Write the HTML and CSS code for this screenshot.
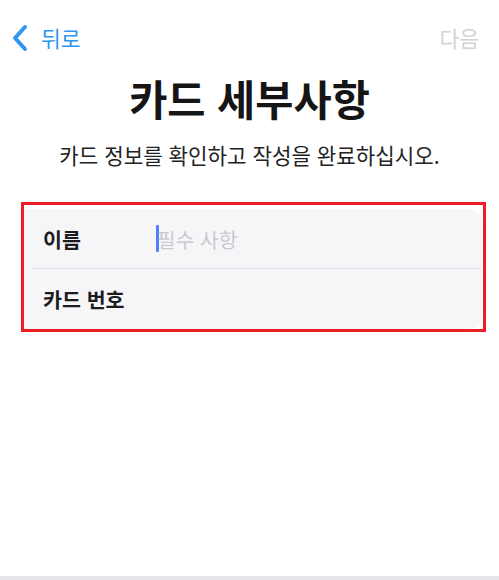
FILE: index.html
```html
<!DOCTYPE html>
<html lang="ko">
<head>
<meta charset="utf-8">
<title>카드 세부사항</title>
<link rel="stylesheet" href="styles.css">
</head>
<body>
<div class="page">
  <header class="nav">
    <a class="back">
      <svg class="chev" width="18" height="28" viewBox="0 0 18 28" aria-hidden="true">
        <polyline points="14,3 4,14 14,25" fill="none" stroke="#2e95f3" stroke-width="4" stroke-linecap="round" stroke-linejoin="round"/>
      </svg>
      <span class="back-label">뒤로</span>
    </a>
    <span class="next">다음</span>
  </header>

  <h1 class="title">카드 세부사항</h1>
  <p class="subtitle">카드 정보를 확인하고 작성을 완료하십시오.</p>

  <div class="highlight">
    <div class="card">
      <div class="row">
        <span class="label">이름</span>
        <span class="field"><span class="caret"></span><span class="placeholder">필수 사항</span></span>
      </div>
      <div class="sep"></div>
      <div class="row row-last">
        <span class="label">카드 번호</span>
      </div>
    </div>
  </div>

  <div class="spacer"></div>
  <div class="bottom-strip"></div>
</div>
</body>
</html>
```

FILE: styles.css
```css
html, body {
  margin: 0;
  padding: 0;
  background: #ffffff;
}

body {
  font-family: "Noto Sans CJK KR", "Noto Sans", sans-serif;
  color: #1c1c1e;
}

.page {
  min-height: 580px;
  display: flex;
  flex-direction: column;
}

.nav {
  height: 74px;
  display: flex;
  align-items: center;
  justify-content: space-between;
  padding: 2px 20px 0 11px;
  box-sizing: border-box;
}

.back {
  display: flex;
  align-items: center;
  gap: 12px;
  color: #2e95f3;
}

.chev {
  display: block;
}

.back-label {
  font-size: 21.5px;
  line-height: 28px;
}

.next {
  font-size: 21.5px;
  line-height: 28px;
  color: #d3d3d6;
}

.title {
  margin: 0;
  text-align: center;
  font-size: 41.5px;
  line-height: 48px;
  font-weight: 700;
  color: #151515;
}

.subtitle {
  margin: 19px 0 0;
  text-align: center;
  font-size: 21.2px;
  line-height: 28px;
  color: #222222;
}

.highlight {
  margin: 33px 0 0 21px;
  width: 457px;
  border: 3px solid #ee1c25;
  padding: 4px 2px 0 0;
}

.card {
  background: #f6f6f8;
  border-radius: 0 12px 12px 0;
}

.row {
  height: 59px;
  display: flex;
  align-items: center;
  padding-left: 19px;
}

.row-last {
  height: 60px;
}

.label {
  width: 114px;
  font-size: 20.6px;
  font-weight: 700;
  color: #1c1c1e;
  line-height: 28px;
}

.field {
  display: flex;
  align-items: center;
}

.caret {
  width: 3px;
  height: 27px;
  background: #4f82f7;
  border-radius: 1px;
  margin-left: -1px;
}

.placeholder {
  font-size: 20.3px;
  line-height: 28px;
  color: #c9c9ce;
  margin-left: -2px;
}

.sep {
  height: 1px;
  background: #e2e2e6;
  margin-left: 8px;
}

.spacer {
  flex: 1;
}

.bottom-strip {
  height: 4px;
  background: #e4e4e9;
}
```
